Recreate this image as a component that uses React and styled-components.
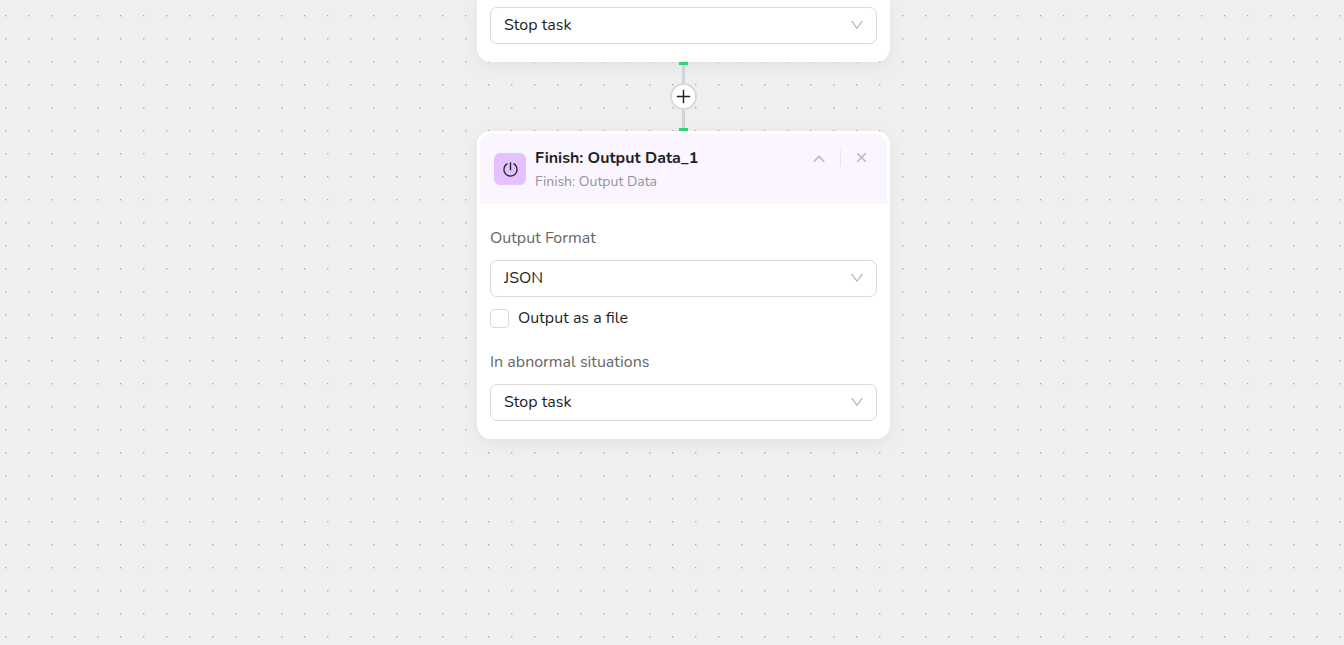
import * as React from 'react';
import styled, { createGlobalStyle } from 'styled-components';
import { AiOutlineDown, AiOutlinePlus, AiOutlinePoweroff } from 'react-icons/ai';

const colors = {
    canvas: '#efefef',
    dot: '#a8a8a8',
    dotEdge: '#dcdcdc',
    text: '#1f1f1f',
    label: '#666666',
    muted: '#97929d',
    icon: '#b8b8b8',
    action: '#bfbbc2',
    border: '#d9d9d9',
    line: '#d1d5db',
    port: '#2bd97c',
    header: '#faf5ff',
    purple: '#e4c1ff',
}

const GlobalStyle = createGlobalStyle`
    * {
        box-sizing: border-box;
    }

    body {
        margin: 0;
        background-color: ${colors.canvas};
        font-family: Nunito, 'Open Sans', sans-serif;
        font-size: 16px;
        color: ${colors.text};
    }
`

const Canvas = styled.main`
    display: flex;
    flex-direction: column;
    align-items: center;
    min-height: 100vh;
    padding-left: 23px;
    background-image:
        conic-gradient(from 270deg at 1px 1px, ${colors.dot} 90deg, transparent 90deg),
        conic-gradient(from 270deg at 2px 2px, ${colors.dotEdge} 90deg, transparent 90deg);
    background-position: 5px 15px;
    background-size: 23px 23px;
`

const Node = styled.section`
    width: 413px;
    max-width: 100%;
    background-color: white;
    border-radius: ${props => props.$cut ? '0 0 14px 14px' : '14px'};
    box-shadow: 0 4px 16px rgba(0, 0, 0, 0.06);
`

const NodeHeader = styled.header`
    display: flex;
    align-items: flex-start;
    height: 73px;
    padding: 12px 18px 0 14px;
    background-color: ${colors.header};
    border: 3px solid white;
    border-bottom: 0;
    border-radius: 14px 14px 0 0;
`

const NodeIcon = styled.div`
    display: flex;
    align-items: center;
    justify-content: center;
    width: 32px;
    height: 32px;
    margin: 7px 9px 0 0;
    background-color: ${colors.purple};
    border-radius: 6px;
`

const Titles = styled.div`
    flex: 1;
`

const Title = styled.h2`
    margin: 0;
    font-size: 16px;
    font-weight: 700;
    line-height: 24px;
`

const Subtitle = styled.p`
    margin: 0;
    font-size: 14px;
    line-height: 24px;
    color: ${colors.muted};
`

const Actions = styled.div`
    display: flex;
    align-items: center;
    height: 24px;
    gap: 14px;
`

const IconButton = styled.button`
    display: flex;
    padding: 0;
    background: none;
    border: 0;
    color: ${colors.action};
    cursor: pointer;
`

const Divider = styled.span`
    width: 1px;
    height: 16px;
    background-color: #ebe4f2;
`

const NodeBody = styled.div`
    display: flex;
    flex-direction: column;
    padding: ${props => props.$cut ? '7px 13px 18px' : '22px 13px 18px'};
`

const Label = styled.label`
    margin-bottom: 10px;
    line-height: 24px;
    color: ${colors.label};
`

const SelectBox = styled.div`
    display: grid;
    grid-template-columns: 1fr 40px;
    align-items: center;
    color: ${colors.icon};

    svg {
        grid-area: 1 / 2;
        justify-self: center;
        margin-bottom: 2px;
        pointer-events: none;
    }
`

const Select = styled.select`
    grid-area: 1 / 1 / 2 / 3;
    height: 37px;
    padding: 0 34px 2px 13px;
    appearance: none;
    background-color: white;
    border: 1px solid ${colors.border};
    border-radius: 7px;
    font: inherit;
    color: ${colors.text};
`

const CheckRow = styled.label`
    display: flex;
    align-items: center;
    gap: 9px;
    margin: 9px 0 20px;
    line-height: 24px;
`

const Checkbox = styled.input`
    width: 19px;
    height: 19px;
    margin: 0;
    appearance: none;
    background-color: white;
    border: 1px solid ${colors.border};
    border-radius: 4px;

    &:checked {
        background-color: ${colors.purple};
    }
`

const Connector = styled.div`
    display: flex;
    flex-direction: column;
    align-items: center;
`

const Port = styled.span`
    width: 9px;
    height: 3px;
    background-color: ${colors.port};
`

const Line = styled.span`
    width: 3px;
    height: 18px;
    background-color: ${colors.line};
`

const AddButton = styled.button`
    display: flex;
    align-items: center;
    justify-content: center;
    width: 27px;
    height: 27px;
    padding: 0;
    background-color: white;
    border: 2px solid ${colors.border};
    border-radius: 50%;
    color: ${colors.text};
    cursor: pointer;
`

const StrokeIcon = ({ d }) => (
    <svg width="14" height="14" viewBox="0 0 14 14" fill="none" stroke="currentColor" strokeWidth="1.6">
        <path d={d} />
    </svg>
)

const Dropdown = ({ options, ...props }) => (
    <SelectBox>
        <Select {...props}>
            {options.map(option => <option key={option}>{option}</option>)}
        </Select>
        <AiOutlineDown size={16} />
    </SelectBox>
)

const App = () => {
    return (
        <Canvas>
            <GlobalStyle />
            <Node $cut>
                <NodeBody $cut>
                    <Dropdown aria-label="In abnormal situations" options={['Stop task']} />
                </NodeBody>
            </Node>
            <Connector>
                <Port />
                <Line />
                <AddButton aria-label="Add step">
                    <AiOutlinePlus size={19} />
                </AddButton>
                <Line />
                <Port />
            </Connector>
            <Node>
                <NodeHeader>
                    <NodeIcon>
                        <AiOutlinePoweroff size={17} />
                    </NodeIcon>
                    <Titles>
                        <Title>Finish: Output Data_1</Title>
                        <Subtitle>Finish: Output Data</Subtitle>
                    </Titles>
                    <Actions>
                        <IconButton aria-label="Collapse">
                            <StrokeIcon d="M1.8 10.6 7 5.4l5.2 5.2" />
                        </IconButton>
                        <Divider />
                        <IconButton aria-label="Remove">
                            <StrokeIcon d="M2.4 2.4l8.4 8.4M10.8 2.4l-8.4 8.4" />
                        </IconButton>
                    </Actions>
                </NodeHeader>
                <NodeBody>
                    <Label htmlFor="format">Output Format</Label>
                    <Dropdown id="format" options={['JSON']} />
                    <CheckRow>
                        <Checkbox type="checkbox" />
                        Output as a file
                    </CheckRow>
                    <Label htmlFor="abnormal">In abnormal situations</Label>
                    <Dropdown id="abnormal" options={['Stop task']} />
                </NodeBody>
            </Node>
        </Canvas>
    )
}

export default App;
